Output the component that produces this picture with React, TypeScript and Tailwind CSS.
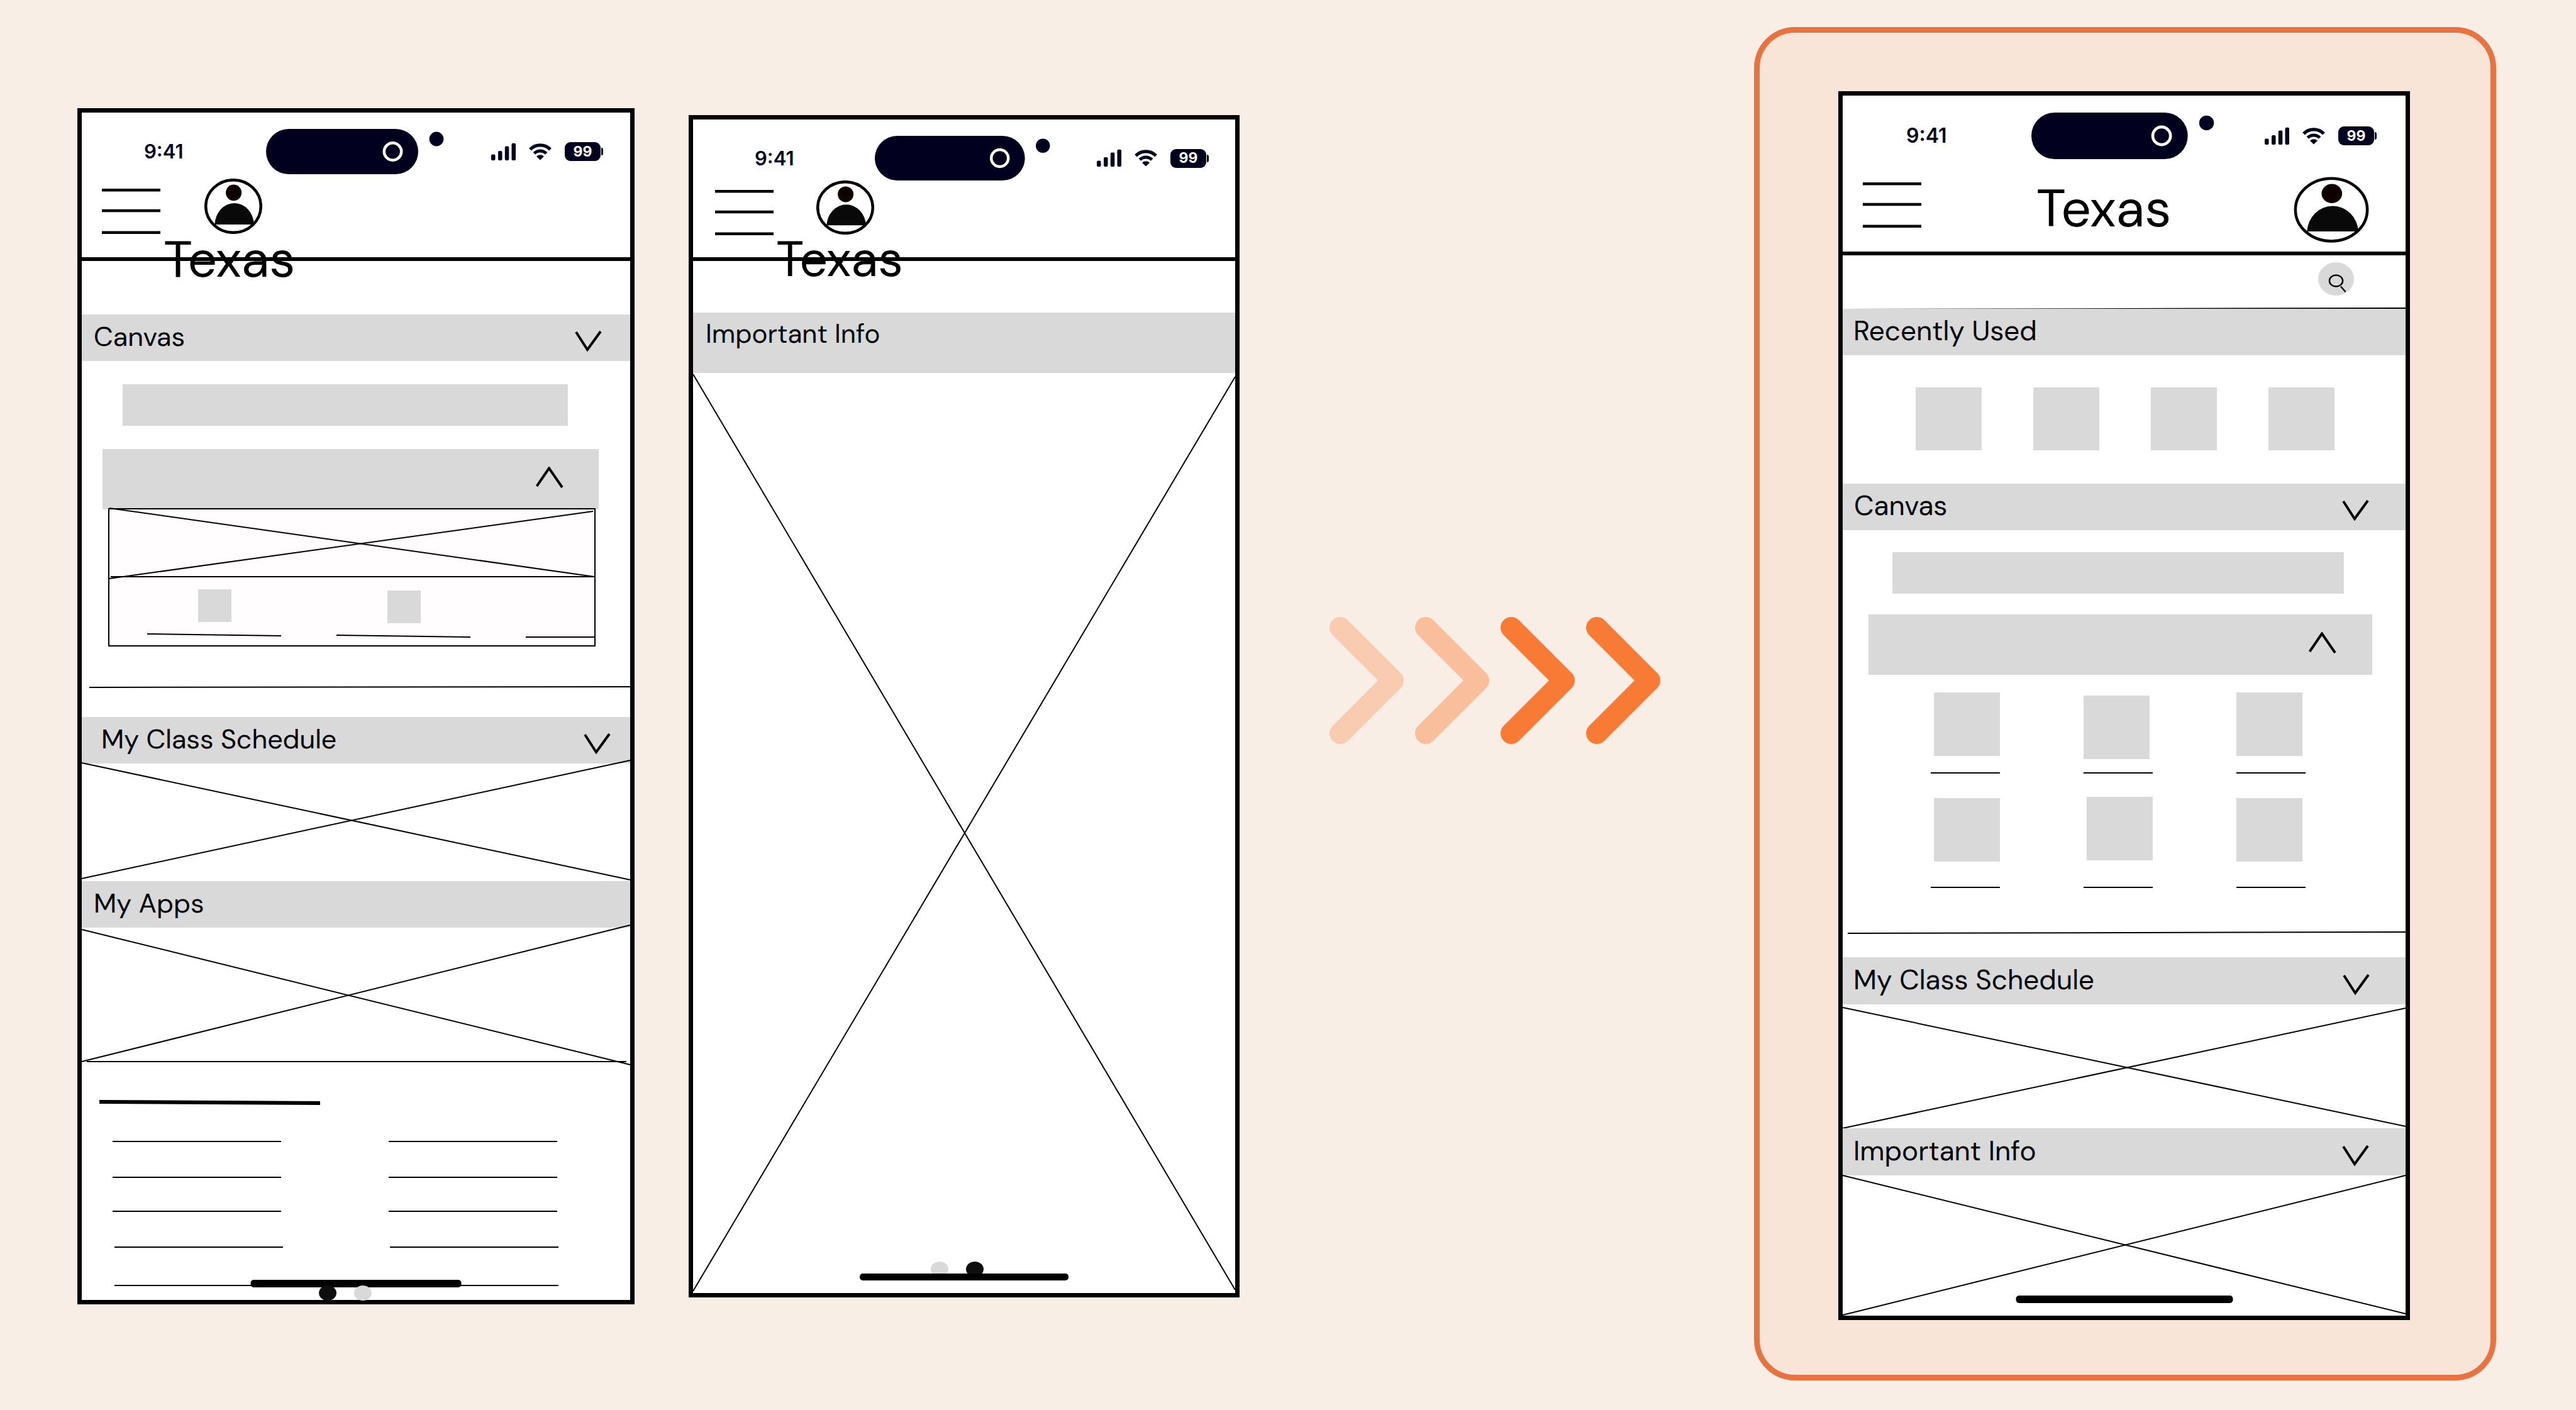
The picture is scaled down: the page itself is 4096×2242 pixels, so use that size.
import type { ReactNode } from "react";

type Line = [number, number, number, number];

/** Thin strokes that stretch with the width of their section. */
function Strokes({ width, height, lines, className }: { width: number; height: number; lines: Line[]; className: string }) {
  return (
    <svg
      aria-hidden="true"
      viewBox={`0 0 ${width} ${height}`}
      preserveAspectRatio="none"
      className={`block shrink-0 overflow-visible ${className}`}
    >
      {lines.map(([x1, y1, x2, y2], i) => (
        <line key={i} x1={x1} y1={y1} x2={x2} y2={y2} stroke="#000" vectorEffect="non-scaling-stroke" />
      ))}
    </svg>
  );
}

function Chevron({ up = false, className = "" }: { up?: boolean; className?: string }) {
  return (
    <svg aria-hidden="true" viewBox="0 0 44 34" className={`h-[34px] w-[44px] shrink-0 ${className}`}>
      <path d={up ? "M1.5 31 L21 2.5 L42 33" : "M3 3 L21 31 L42 2"} fill="none" stroke="#000" strokeWidth="4" />
    </svg>
  );
}

function StatusBar({ className, timeClass, islandClass, endClass }: { className: string; timeClass: string; islandClass: string; endClass: string }) {
  return (
    <div className={`flex shrink-0 items-center text-[#01001f] ${className}`}>
      <time className={`shrink-0 font-['Inter',sans-serif] font-semibold leading-10 ${timeClass}`}>9:41</time>
      <svg aria-hidden="true" viewBox="0 0 288 72" className={`shrink-0 ${islandClass}`}>
        <rect width="242" height="72" rx="36" fill="#01001f" />
        <circle cx="201.5" cy="36" r="13.7" fill="none" stroke="#fff" strokeWidth="4.5" />
        <circle cx="271" cy="16" r="16" fill="#fdfdfd" />
        <circle cx="271" cy="16" r="11.4" fill="#01001f" />
      </svg>
      <div className={`ml-auto flex shrink-0 items-center ${endClass}`}>
        <svg aria-hidden="true" viewBox="0 0 97 29" className="h-[29px] w-[97px]" fill="#01001f">
          <rect x="0" y="18.5" width="6.5" height="9.5" rx="2" />
          <rect x="11" y="13" width="6.5" height="15" rx="2" />
          <rect x="21.8" y="5.4" width="6.5" height="22.6" rx="2" />
          <rect x="32.5" y="0.8" width="6.5" height="27.2" rx="2" />
          <path d="M62 10.6 A22.5 22.5 0 0 1 94 10.6" fill="none" stroke="#01001f" strokeWidth="5.4" />
          <path d="M68.4 17 A13.5 13.5 0 0 1 87.6 17" fill="none" stroke="#01001f" strokeWidth="5.2" />
          <path d="M78 27.6 L72 21.8 A8.6 8.6 0 0 1 84 21.8 Z" />
        </svg>
        <span className="ml-5 flex h-[30px] w-[57px] items-center justify-center rounded-[9px] bg-[#01001f] font-['Inter',sans-serif] text-[23px] font-bold leading-none text-white">
          99
        </span>
        <span className="ml-px h-[12px] w-[3px] rounded-r-[3px] bg-[#01001f]" />
      </div>
    </div>
  );
}

function MenuButton({ className }: { className: string }) {
  return (
    <button type="button" aria-label="Menu" className={`shrink-0 ${className}`}>
      <svg aria-hidden="true" viewBox="0 0 93 72" className="block h-[72px] w-[93px]" stroke="#000" strokeWidth="4.4">
        <path d="M0 2.2 H93 M0 35 H93 M0 69.8 H93" />
      </svg>
    </button>
  );
}

function Avatar({ className }: { className: string }) {
  return (
    <button type="button" aria-label="Profile" className={`block shrink-0 ${className}`}>
      <svg aria-hidden="true" viewBox="0 0 92 88" preserveAspectRatio="none" className="block h-full w-full">
        <ellipse cx="46" cy="44" rx="43.8" ry="41.8" fill="#fff" stroke="#000" strokeWidth="4.5" vectorEffect="non-scaling-stroke" />
        <ellipse cx="46.6" cy="22.4" rx="12.5" ry="12.8" fill="#0e0000" />
        <path d="M16.3 73 A31.4 36 0 0 1 79 73 Z" fill="#090909" />
      </svg>
    </button>
  );
}

function SectionBar({ title, textClass, className, toggle }: { title: string; textClass: string; className: string; toggle?: string }) {
  const label = <span className={`pb-1 ${textClass}`}>{title}</span>;
  if (!toggle) {
    return <h2 className={`flex shrink-0 items-center bg-[#d9d9d9] ${className}`}>{label}</h2>;
  }
  return (
    <button type="button" className={`flex w-full shrink-0 items-center justify-between bg-[#d9d9d9] text-left ${className}`}>
      {label}
      <Chevron className={`mt-[10px] ${toggle}`} />
    </button>
  );
}

function Phone({ className, children }: { className: string; children: ReactNode }) {
  return <section className={`relative flex min-w-0 flex-col border-[7px] border-black bg-white text-black ${className}`}>{children}</section>;
}

function HomeIndicator({ className }: { className: string }) {
  return <div className={`absolute left-1/2 -translate-x-1/2 rounded-[5px] bg-black ${className}`} />;
}

function ColumnRules({ className }: { className: string }) {
  return (
    <div className={`flex shrink-0 justify-between ${className}`}>
      <div className="h-[2px] w-[268px] bg-black" />
      <div className="h-[2px] w-[268px] bg-black" />
    </div>
  );
}

function HomePhone() {
  return (
    <Phone className="mt-[172px]">
      <header className="flex h-[236px] shrink-0 flex-col border-b-[6px] border-black">
        <StatusBar className="mt-[26px] h-[72px]" timeClass="w-[293px] pl-[99px] text-[31px]" islandClass="h-[72px] w-[288px]" endClass="mr-[43px]" />
        <div className="flex items-start pl-8">
          <MenuButton className="mt-[23px]" />
          <div className="ml-[5px] mt-[7px]">
            <Avatar className="ml-[65px] h-[88px] w-[92px]" />
            <h1 className="text-[82px] leading-[80px]">Texas</h1>
          </div>
        </div>
      </header>

      <SectionBar title="Canvas" textClass="text-[43px] leading-[56px]" className="mt-[85px] h-[74px] pl-[19px]" toggle="mr-[45px]" />
      <div className="ml-[65px] mr-[99px] mt-[37px] h-[66px] shrink-0 bg-[#d9d9d9]" />
      <button type="button" aria-label="Collapse course" className="ml-[33px] mr-[50px] mt-[37px] flex h-[96px] shrink-0 items-center justify-end bg-[#d9d9d9] pb-[7px] pr-[56px]">
        <Chevron up />
      </button>
      <div className="ml-[42px] mr-[55px] -mt-[2px] h-[220px] shrink-0 border-2 border-black bg-[#fffdfe]">
        <Strokes
          width={772}
          height={107}
          className="h-[107px] w-full stroke-2"
          lines={[[0, -2, 772, 107], [0, 110, 770, 3], [2, 107, 770, 107]]}
        />
        <div className="flex justify-between">
          <div className="ml-[60px] mt-[20px] w-[213px]">
            <div className="ml-[81px] h-[52px] w-[53px] bg-[#d9d9d9]" />
            <Strokes width={213} height={3} className="mt-[19px] h-[3px] w-[213px] stroke-2" lines={[[0, 0, 213, 3]]} />
          </div>
          <div className="mt-[22px] w-[213px]">
            <div className="ml-[81px] h-[52px] w-[53px] bg-[#d9d9d9]" />
            <Strokes width={213} height={3} className="mt-[19px] h-[3px] w-[213px] stroke-2" lines={[[0, 0, 213, 3]]} />
          </div>
          <div className="mt-[95px] h-[2px] w-[109px] bg-black" />
        </div>
      </div>
      <Strokes width={861} height={2} className="ml-3 mt-[63px] h-[2px] w-auto stroke-2" lines={[[0, 2, 861, 1]]} />
      <SectionBar title="My Class Schedule" textClass="text-[43px] leading-[56px]" className="mt-[47px] h-[74px] pl-[31px]" toggle="mr-[31px]" />
      <Strokes width={872} height={187} className="h-[187px] w-full stroke-2" lines={[[0, -1, 872, 185], [0, 183, 872, -5]]} />
      <SectionBar title="My Apps" textClass="text-[43px] leading-[56px]" className="h-[74px] pl-[19px]" />
      <Strokes width={872} height={218} className="h-[218px] w-full stroke-2" lines={[[0, 3, 872, 218], [0, 213, 872, -4], [8, 213, 866, 213]]} />

      <Strokes width={351} height={6} className="ml-[28px] mt-[56px] h-[6px] w-[351px] stroke-6" lines={[[0, 3, 351, 5]]} />
      <div className="ml-[49px] mr-[116px] shrink-0">
        <ColumnRules className="mt-[59px]" />
        <ColumnRules className="mt-[55px]" />
        <ColumnRules className="mt-[52px]" />
      </div>
      <div className="ml-[52px] mr-[114px] shrink-0 pb-[22px]">
        <ColumnRules className="mt-[55px]" />
        <div className="mt-[59px] h-[2px] bg-black" />
      </div>
      <HomeIndicator className="bottom-5 h-[12px] w-[335px]" />
      <div className="absolute -bottom-px left-[377px] flex gap-7">
        <span className="h-6 w-7 rounded-[50%] bg-[#0e0e0e]" />
        <span className="h-6 w-7 rounded-[50%] bg-[#d9d9d9]" />
      </div>
    </Phone>
  );
}

function InfoPhone() {
  return (
    <Phone className="mt-[183px]">
      <header className="flex h-[225px] shrink-0 flex-col border-b-[6px] border-black">
        <StatusBar className="mt-[26px] h-[71px]" timeClass="w-[289px] pl-[98px] text-[31px]" islandClass="h-[71px] w-[284px]" endClass="mr-[42px]" />
        <div className="flex items-start pl-[35px]">
          <MenuButton className="mt-[15px]" />
          <div className="ml-1">
            <Avatar className="ml-[64px] h-[86px] w-[92px]" />
            <h1 className="text-[79px] leading-[78px]">Texas</h1>
          </div>
        </div>
      </header>
      <h2 className="mt-[82px] h-[96px] shrink-0 bg-[#d9d9d9] pl-5 text-[42px] leading-[68px]">Important Info</h2>
      <Strokes width={862} height={1463} className="h-[1463px] w-full stroke-2" lines={[[0, 2, 862, 1458], [0, 1460, 862, 6]]} />
      <div className="absolute bottom-[26px] left-[378px] flex gap-7">
        <span className="h-6 w-7 rounded-[50%] bg-[#d9d9d9]" />
        <span className="h-6 w-7 rounded-[50%] bg-[#0e0e0e]" />
      </div>
      <HomeIndicator className="bottom-5 h-[11px] w-[332px]" />
    </Phone>
  );
}

function CourseTile({ boxClass, gapClass }: { boxClass: string; gapClass: string }) {
  return (
    <div className="flex w-[110px] flex-col justify-end">
      <div className={`h-[101px] w-[105px] bg-[#d9d9d9] ${boxClass}`} />
      <div className={`h-[2px] bg-black ${gapClass}`} />
    </div>
  );
}

function RedesignPhone() {
  return (
    <Phone className="w-full">
      <header className="flex h-[254px] shrink-0 flex-col border-b-[6px] border-black">
        <StatusBar className="mt-[27px] h-[74px]" timeClass="w-[300px] pl-[101px] text-[32px]" islandClass="h-[74px] w-[296px]" endClass="mr-[46px]" />
        <div className="flex items-start justify-between pl-[32px] pr-[58px]">
          <MenuButton className="mt-[37px]" />
          <h1 className="mt-[37px] pr-[12px] text-[84px] leading-[84px]">Texas</h1>
          <Avatar className="mt-[28px] h-[105px] w-[120px]" />
        </div>
      </header>
      <div className="flex h-[84px] shrink-0 items-start justify-end pr-[82px] pt-[11px]">
        <button type="button" aria-label="Search" className="h-[53px] w-[57px] rounded-[50%] bg-[#d9d9d9]">
          <svg aria-hidden="true" viewBox="0 0 57 53" className="block h-full w-full" fill="none" stroke="#000" strokeWidth="2.4">
            <ellipse cx="28.5" cy="29.5" rx="10.6" ry="9" />
            <path d="M36 38.5 L43.5 47" />
          </svg>
        </button>
      </div>
      <Strokes width={895} height={1} className="h-px w-full stroke-2" lines={[[0, 2, 895, 0]]} />
      <SectionBar title="Recently Used" textClass="text-[44px] leading-[56px]" className="relative h-[74px] pl-[17px]" />
      <div className="flex shrink-0 gap-[82px] pl-[116px] pt-[51px]">
        <div className="h-[100px] w-[105px] bg-[#d9d9d9]" />
        <div className="h-[100px] w-[105px] bg-[#d9d9d9]" />
        <div className="h-[100px] w-[105px] bg-[#d9d9d9]" />
        <div className="h-[100px] w-[105px] bg-[#d9d9d9]" />
      </div>

      <SectionBar title="Canvas" textClass="text-[44px] leading-[56px]" className="mt-[53px] h-[74px] pl-[18px]" toggle="mr-[58px]" />
      <div className="ml-[79px] mr-[98px] mt-[35px] h-[66px] shrink-0 bg-[#d9d9d9]" />
      <button type="button" aria-label="Collapse course" className="ml-[41px] mr-[53px] mt-[33px] flex h-[96px] shrink-0 items-center justify-end bg-[#d9d9d9] pb-[7px] pr-[57px]">
        <Chevron up />
      </button>
      <div className="flex shrink-0 items-end gap-[133px] pl-[140px] pt-[28px]">
        <CourseTile boxClass="self-end" gapClass="mt-[26px]" />
        <CourseTile boxClass="self-start" gapClass="mt-[21px]" />
        <CourseTile boxClass="self-start" gapClass="mt-[26px]" />
      </div>
      <div className="flex shrink-0 items-end gap-[133px] pl-[140px] pt-[37px]">
        <CourseTile boxClass="self-end" gapClass="mt-[40px]" />
        <CourseTile boxClass="self-end" gapClass="mt-[42px]" />
        <CourseTile boxClass="self-start" gapClass="mt-[40px]" />
      </div>
      <Strokes width={887} height={2} className="ml-2 mt-[70px] h-[2px] w-auto stroke-2" lines={[[0, 2, 887, 0]]} />

      <SectionBar title="My Class Schedule" textClass="text-[44px] leading-[56px]" className="mt-[38px] h-[75px] pl-[17px]" toggle="mr-[57px]" />
      <Strokes width={895} height={197} className="h-[197px] w-full stroke-2" lines={[[0, 5, 895, 194], [0, 197, 895, 6]]} />
      <SectionBar title="Important Info" textClass="text-[44px] leading-[56px]" className="h-[75px] pl-[17px]" toggle="mr-[58px]" />
      <Strokes width={895} height={223} className="h-[223px] w-full stroke-2" lines={[[0, 0, 895, 220], [0, 222, 895, 0]]} />
      <HomeIndicator className="bottom-5 h-[12px] w-[345px]" />
    </Phone>
  );
}

function Arrow({ className }: { className: string }) {
  return (
    <svg viewBox="0 0 118 202" className={`h-[202px] w-[118px] ${className}`} fill="none" strokeWidth="34" strokeLinecap="round" strokeLinejoin="round">
      <path d="M17 17 L101 101 L17 185" />
    </svg>
  );
}

export default function App() {
  return (
    <main className="grid min-h-screen grid-cols-[minmax(0,886fr)_86px_minmax(0,876fr)_818px_minmax(0,1180fr)] items-start bg-[#f8eee5] pb-[43px] pl-[123px] pr-[127px] font-['DM_Sans','Inter',sans-serif]">
      <HomePhone />
      <div />
      <InfoPhone />
      <div aria-hidden="true" className="mt-[981px] flex gap-[18px] pl-[143px]">
        <Arrow className="stroke-[#f9cbb0]" />
        <Arrow className="stroke-[#f9bf9d]" />
        <Arrow className="stroke-[#f87b35]" />
        <Arrow className="stroke-[#f87b35]" />
      </div>
      <div className="mt-[43px] rounded-[65px] border-[9px] border-[#e77340] bg-[#f9e5d8] pb-[87px] pl-[125px] pr-[128px] pt-[93px]">
        <RedesignPhone />
      </div>
    </main>
  );
}
